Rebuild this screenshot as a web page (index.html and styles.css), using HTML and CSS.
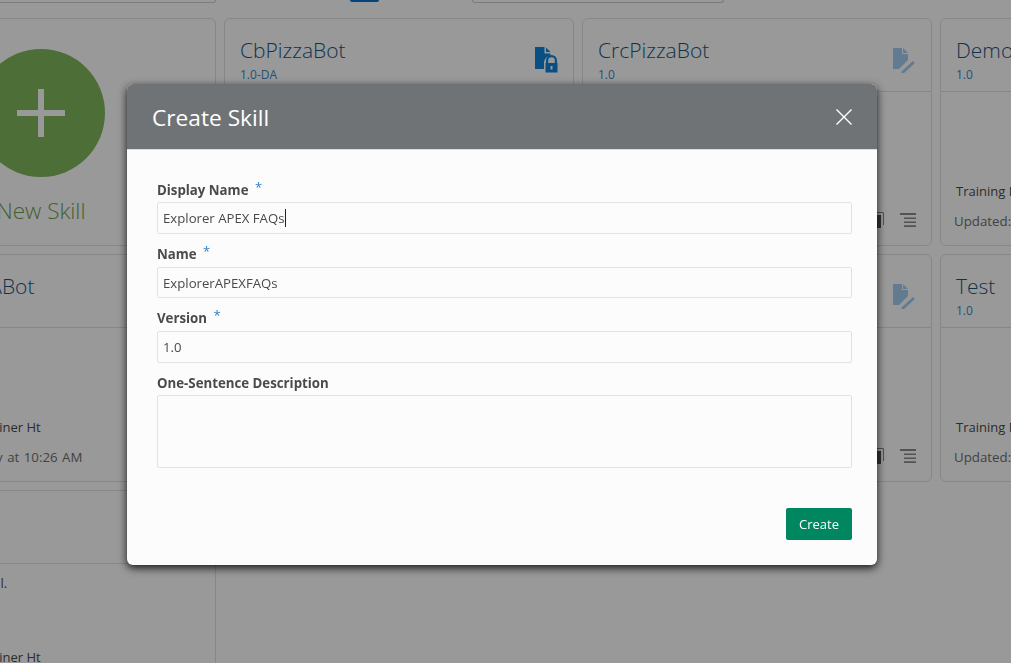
FILE: index.html
```html
<!DOCTYPE html>
<html lang="en">
<head>
<meta charset="utf-8">
<title>Create Skill</title>
<link rel="stylesheet" href="styles.css">
</head>
<body>
<div class="page">
  <div class="toolbar">
    <div class="tool-left"></div>
    <div class="tool-tab"></div>
    <div class="tool-search"></div>
  </div>
  <div class="grid">
    <div class="card card-new">
      <div class="new-circle">
        <svg class="plus" viewBox="0 0 48 48"><path d="M21 0h6v21h21v6H27v21h-6V27H0v-6h21z"/></svg>
      </div>
      <div class="new-label">New Skill</div>
    </div>
    <div class="card">
      <div class="card-head">
        <div><div class="card-title">CbPizzaBot</div><div class="card-version">1.0-DA</div></div>
        <svg class="state-icon" viewBox="-1 0 24 26">
          <path d="M0 0h9.500v6.500H15.500v2a7.500 7.500 0 0 0-6.500 7V22H0zM11 .5l4.500 4.500H11z"/>
          <path d="M11 16v-2.500a5.500 5.500 0 0 1 11 0V16h.5v9.500h-12V16zm2.200 0h6.600v-2.500a3.300 3.300 0 0 0-6.600 0zM15.500 19v3.500h2V19z" fill-rule="evenodd"/>
        </svg>
      </div>
      <div class="card-body"></div>
    </div>
    <div class="card">
      <div class="card-head">
        <div><div class="card-title">CrcPizzaBot</div><div class="card-version">1.0</div></div>
        <svg class="state-icon draft" viewBox="0 0 24 26">
          <path d="M1 1h9v6h6v6L7 22H1zM11 1l5 5h-5zM21 14l2 2-11 10-3 1 1-3z"/>
        </svg>
      </div>
      <div class="card-body">
        <div class="card-actions">
          <svg class="act-copy" viewBox="0 0 14 16"><path class="copy-back" d="M4 .5h9.500V13" /><rect x="0" y="3" width="11" height="13"/></svg>
          <svg class="act-list" viewBox="0 0 16 14"><path d="M0 0h16v2H0zM4 4.500h12v1.600H4zM4 8.500h12v1.600H4zM4 12.300h12V14H4z"/></svg>
        </div>
      </div>
    </div>
    <div class="card">
      <div class="card-head">
        <div><div class="card-title">DemoBot</div><div class="card-version">1.0</div></div>
      </div>
      <div class="card-body">
        <div class="card-foot"><div class="card-meta">Training Model: Trainer Ht</div><div class="card-meta updated">Updated: Yesterday at 10:26 AM</div></div>
      </div>
    </div>

    <div class="card">
      <div class="card-head">
        <div><div class="card-title">PizzaAgentIABot</div></div>
      </div>
      <div class="card-body">
        <div class="card-foot"><div class="card-meta">Training Model: Trainer Ht</div><div class="card-meta updated">Updated: Yesterday at 10:26 AM</div></div>
      </div>
    </div>
    <div class="card">
      <div class="card-head"></div>
      <div class="card-body"></div>
    </div>
    <div class="card">
      <div class="card-head">
        <div></div>
        <svg class="state-icon draft" viewBox="0 0 24 26">
          <path d="M1 1h9v6h6v6L7 22H1zM11 1l5 5h-5zM21 14l2 2-11 10-3 1 1-3z"/>
        </svg>
      </div>
      <div class="card-body">
        <div class="card-actions">
          <svg class="act-copy" viewBox="0 0 14 16"><path class="copy-back" d="M4 .5h9.500V13" /><rect x="0" y="3" width="11" height="13"/></svg>
          <svg class="act-list" viewBox="0 0 16 14"><path d="M0 0h16v2H0zM4 4.500h12v1.600H4zM4 8.500h12v1.600H4zM4 12.300h12V14H4z"/></svg>
        </div>
      </div>
    </div>
    <div class="card">
      <div class="card-head">
        <div><div class="card-title">Test</div><div class="card-version">1.0</div></div>
      </div>
      <div class="card-body">
        <div class="card-foot"><div class="card-meta">Training Model: Trainer Ht</div><div class="card-meta updated">Updated: Yesterday at 10:26 AM</div></div>
      </div>
    </div>

    <div class="card card-tall">
      <div class="card-head"></div>
      <div class="card-body body-tall">
        <div class="card-desc">This is a sample skill.</div>
        <div class="card-meta meta-tall">Training Model: Trainer Ht</div>
      </div>
    </div>
  </div>
</div>

<div class="overlay"></div>

<div class="modal">
  <div class="modal-head">
    <h1 class="modal-title">Create Skill</h1>
    <svg class="modal-close" viewBox="0 0 16 16"><path d="M.5.500l15 15M15.500.500l-15 15"/></svg>
  </div>
  <div class="modal-body">
    <div class="field field-first">
      <div class="field-label">Display Name <span class="req">*</span></div>
      <div class="input"><span>Explorer APEX FAQs</span><span class="caret"></span></div>
    </div>
    <div class="field field-tall-label">
      <div class="field-label">Name <span class="req">*</span></div>
      <div class="input input-short"><span>ExplorerAPEXFAQs</span></div>
    </div>
    <div class="field field-tall-label">
      <div class="field-label">Version <span class="req">*</span></div>
      <div class="input"><span>1.0</span></div>
    </div>
    <div class="field">
      <div class="field-label">One-Sentence Description</div>
      <div class="input textarea"></div>
    </div>
    <div class="modal-foot"><button class="btn-create" type="button">Create</button></div>
  </div>
</div>
</body>
</html>
```

FILE: styles.css
```css
* { box-sizing: border-box; }
html, body { margin: 0; height: 100%; overflow: hidden; background: #fff; }
body { font-family: "Open Sans", "Liberation Sans", sans-serif; color: #333; }

.page { width: 1500px; margin-left: -134px; }

.toolbar { display: flex; height: 18px; }
.tool-left { width: 350px; height: 3px; border: 1px solid #d0d0d0; border-top: 0; border-radius: 0 0 4px 4px; }
.tool-tab { width: 29px; height: 2px; margin-left: 134px; background: #0572ce; border-radius: 0 0 2px 2px; }
.tool-search { width: 252px; height: 3px; margin-left: 93px; border: 1px solid #c8ced0; border-top: 0; border-radius: 0 0 3px 3px; }

.grid { display: grid; grid-template-columns: repeat(4, 350px); grid-auto-rows: 228px; column-gap: 8px; row-gap: 8px; }

.card { border: 1px solid #dfe2e4; border-radius: 6px; display: flex; flex-direction: column; overflow: hidden; background: #fff; }
.card-tall { height: 400px; }

.card-new { align-items: center; padding-top: 30px; }
.new-circle { width: 128px; height: 128px; border-radius: 50%; background: #80b95c; display: flex; align-items: center; justify-content: center; flex: none; }
.plus { width: 48px; height: 48px; fill: #fff; }
.new-label { margin-top: 18px; font-size: 22.500px; font-weight: 300; color: #6f9f50; line-height: 32px; }

.card-head { height: 73px; flex: none; border-bottom: 1px solid #dfe2e4; padding: 15px 15px 0; display: flex; justify-content: space-between; }
.card-title { font-size: 21px; font-weight: 300; line-height: 32px; color: #1c5580; white-space: nowrap; }
.card-version { font-size: 12px; line-height: 16px; color: #3a88c4; margin-top: 1px; }
.state-icon { width: 24px; height: 26px; margin-top: 13px; flex: none; fill: #1184da; }
.state-icon.draft { fill: #a4cdf0; }

.card-body { flex: 1; position: relative; display: flex; flex-direction: column; justify-content: flex-end; padding: 0 15px 15px; }
.card-meta { font-size: 13px; line-height: 18px; white-space: nowrap; color: #4a4a4a; }
.card-meta.updated { margin-top: 12px; margin-left: -2px; font-size: 13.300px; word-spacing: 1px; color: #6f6f6f; }
.card-actions { display: flex; justify-content: flex-end; align-items: flex-start; gap: 16px; padding-bottom: 2px; }
.act-copy { width: 14px; height: 16px; margin-top: -1px; fill: #555; }
.copy-back { fill: none; stroke: #8a8a8a; stroke-width: 1; }
.act-list { width: 16px; height: 14px; fill: #8a8a8a; }

.body-tall { justify-content: flex-start; padding-top: 10px; }
.card-desc { font-size: 13px; line-height: 18px; white-space: nowrap; color: #4a4a4a; }
.meta-tall { margin-top: 56px; }

.overlay { position: fixed; inset: 0; background: rgba(0, 0, 0, 0.4); }

.modal { position: absolute; left: 127px; top: 84px; width: 750px; height: 481px; background: #fcfcfc; border-radius: 6px; box-shadow: 0 3px 9px rgba(0, 0, 0, 0.85); display: flex; flex-direction: column; overflow: hidden; }
.modal-head { height: 66px; flex: none; background: #6f7376; border-bottom: 1px solid #d6dfe6; padding: 0 25px; display: flex; align-items: center; justify-content: space-between; }
.modal-title { margin: 2px 0 0; font-size: 22.700px; line-height: 32px; font-weight: 400; color: #fff; }
.modal-close { width: 16px; height: 16px; fill: none; stroke: #fff; stroke-width: 1.400; }

.modal-body { flex: 1; padding: 0 25px 25px 30px; display: flex; flex-direction: column; }
.field { margin-top: 12px; }
.field-first { margin-top: 32px; }
.field-label { height: 20px; font-size: 13.250px; line-height: 16px; font-weight: 700; color: #4a4a4a; }
.field-tall-label .field-label { height: 21px; }
.req { color: #2f7fc9; font-weight: 400; font-size: 13px; position: relative; top: -3px; margin-left: 3px; }
.input { height: 32px; border: 1px solid #e0e3e5; border-radius: 2px; background: #fcfcfd; padding: 0 5px; display: flex; align-items: center; font-size: 13.200px; color: #4a4a4a; }
.input-short { height: 31px; }
.textarea { height: 73px; }
.caret { width: 1px; height: 18px; background: #222; }
.modal-foot { margin-top: auto; display: flex; justify-content: flex-end; }
.btn-create { width: 66px; height: 32px; border: 0; border-radius: 2px; background: #00875f; color: #fff; font-family: inherit; font-size: 13px; padding: 0; }
```
